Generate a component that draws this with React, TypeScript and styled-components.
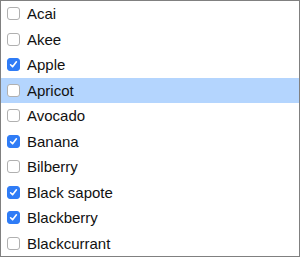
import React, { useState } from "react";
import styled, { createGlobalStyle } from "styled-components";

const GlobalStyle = createGlobalStyle`
  html, body {
    margin: 0;
    padding: 0;
    background: #ffffff;
  }
  body {
    font-family: "Liberation Sans", Arial, sans-serif;
  }
`;

const ListBox = styled.div`
  box-sizing: border-box;
  width: 300px;
  height: 257px;
  border: 1px solid #808080;
  background: #ffffff;
  display: grid;
  grid-template-rows: repeat(10, 1fr);
  overflow: hidden;
`;

const Row = styled.label<{ $active: boolean }>`
  display: flex;
  align-items: center;
  gap: 7px;
  padding-left: 6px;
  background: ${(p) => (p.$active ? "#b4d5fe" : "transparent")};
  font-size: 15px;
  color: #111111;
  cursor: default;
  user-select: none;
`;

const Box = styled.span<{ $checked: boolean }>`
  box-sizing: border-box;
  width: 13px;
  height: 13px;
  border-radius: 3px;
  display: flex;
  align-items: center;
  justify-content: center;
  flex-shrink: 0;
  background: ${(p) => (p.$checked ? "#2f7cf6" : "#ffffff")};
  border: 1px solid ${(p) => (p.$checked ? "#2f7cf6" : "#b0b0b0")};
`;

const Label = styled.span`
  line-height: 1;
`;

const fruits = [
  "Acai",
  "Akee",
  "Apple",
  "Apricot",
  "Avocado",
  "Banana",
  "Bilberry",
  "Black sapote",
  "Blackberry",
  "Blackcurrant",
];

export default function App() {
  const [checked, setChecked] = useState<Record<string, boolean>>({
    Apple: true,
    Banana: true,
    "Black sapote": true,
    Blackberry: true,
  });
  const active = "Apricot";

  const toggle = (name: string) =>
    setChecked((prev) => ({ ...prev, [name]: !prev[name] }));

  return (
    <>
      <GlobalStyle />
      <ListBox>
        {fruits.map((name) => (
          <Row key={name} $active={name === active} onClick={() => toggle(name)}>
            <Box $checked={!!checked[name]}>
              {checked[name] && (
                <svg width="9" height="9" viewBox="0 0 9 9">
                  <path
                    d="M1.6 4.8 L3.6 6.8 L7.4 1.8"
                    fill="none"
                    stroke="#ffffff"
                    strokeWidth="1.6"
                    strokeLinecap="round"
                    strokeLinejoin="round"
                  />
                </svg>
              )}
            </Box>
            <Label>{name}</Label>
          </Row>
        ))}
      </ListBox>
    </>
  );
}
